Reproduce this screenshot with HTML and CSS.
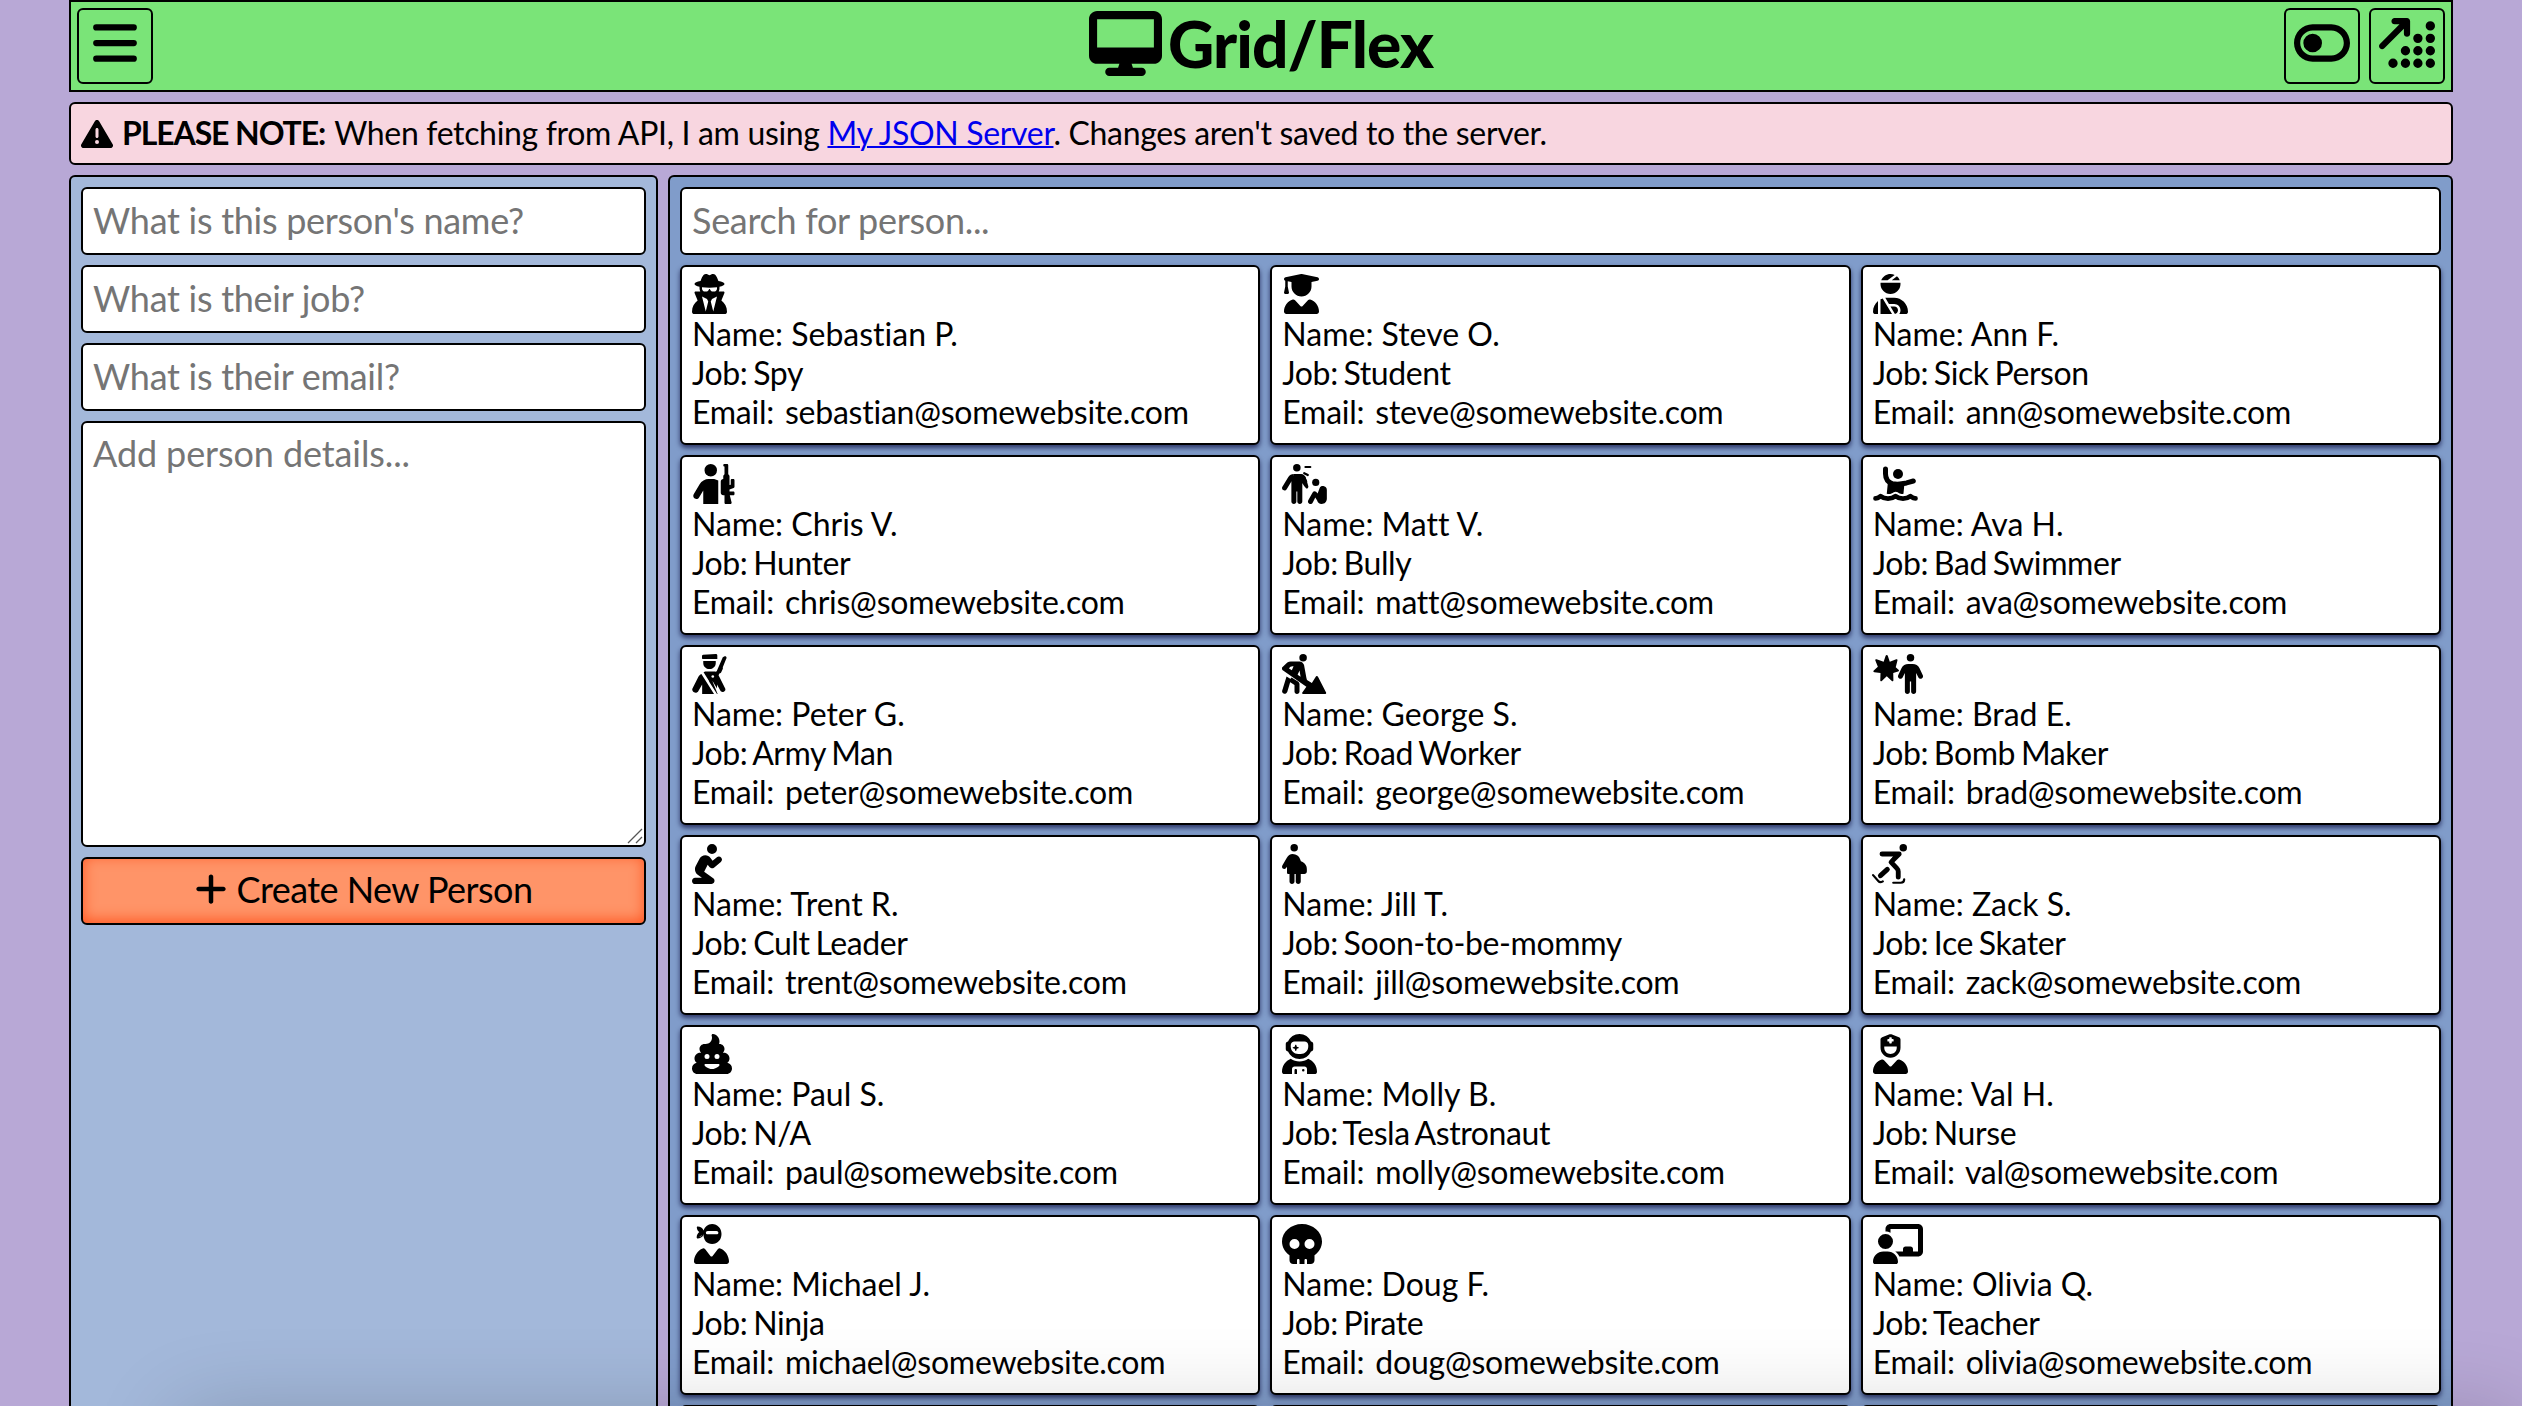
FILE: index.html
```html
<!DOCTYPE html>
<html lang="en">
<head>
<meta charset="utf-8">
<title>Grid/Flex</title>
<link rel="stylesheet" href="styles.css">
</head>
<body>
<svg class="sprite" aria-hidden="true">
  <symbol id="bars" viewBox="0 0 448 512"><path d="M32 96H416M32 256H416M32 416H416" fill="none" stroke="currentColor" stroke-width="64" stroke-linecap="round"/></symbol>
  <symbol id="desktop" viewBox="0 0 576 512"><path d="M64 0C28.7 0 0 28.7 0 64V352c0 35.3 28.7 64 64 64H240l-10.7 32H160c-17.7 0-32 14.3-32 32s14.3 32 32 32H416c17.7 0 32-14.3 32-32s-14.3-32-32-32H346.7L336 416H512c35.3 0 64-28.7 64-64V64c0-35.3-28.7-64-64-64H64zM512 64V288H64V64H512z"/></symbol>
  <symbol id="toggle" viewBox="0 0 576 512"><path d="M384 128c70.7 0 128 57.3 128 128s-57.3 128-128 128H192c-70.7 0-128-57.3-128-128s57.3-128 128-128H384zM576 256c0-106-86-192-192-192H192C86 64 0 150 0 256S86 448 192 448H384c106 0 192-86 192-192zM192 352a96 96 0 1 0 0-192 96 96 0 1 0 0 192z"/></symbol>
  <symbol id="dots" viewBox="0 0 576 512"><path d="M160 0c-17.7 0-32 14.3-32 32s14.3 32 32 32h50.7L9.4 265.4c-12.5 12.5-12.5 32.8 0 45.3s32.8 12.5 45.3 0L256 109.3V160c0 17.7 14.3 32 32 32s32-14.3 32-32V32c0-17.7-14.3-32-32-32H160z"/><path d="M528 80h0M400 208h0M528 208h0M272 336h0M400 336h0M528 336h0M144 464h0M272 464h0M400 464h0M528 464h0" stroke="currentColor" stroke-width="96" stroke-linecap="round"/></symbol>
  <symbol id="warning" viewBox="0 0 512 512"><path d="M256 32c14.2 0 27.3 7.5 34.5 19.8l216 368c7.3 12.4 7.3 27.7 .2 40.1S486.3 480 472 480H40c-14.3 0-27.6-7.7-34.7-20.1s-7-27.8 .2-40.1l216-368C228.7 39.5 241.8 32 256 32zm0 128c-13.3 0-24 10.7-24 24V296c0 13.3 10.7 24 24 24s24-10.7 24-24V184c0-13.3-10.7-24-24-24zm32 224a32 32 0 1 0 -64 0 32 32 0 1 0 64 0z"/></symbol>
  <symbol id="plus" viewBox="0 0 448 512"><path d="M256 80c0-17.7-14.3-32-32-32s-32 14.3-32 32V224H48c-17.7 0-32 14.3-32 32s14.3 32 32 32H192V432c0 17.7 14.3 32 32 32s32-14.3 32-32V288H400c17.7 0 32-14.3 32-32s-14.3-32-32-32H256V80z"/></symbol>
  <symbol id="spy" viewBox="0 0 448 512"><path d="M224 16c-6.7 0-10.8-2.8-15.5-6.1C201.9 5.4 194 0 176 0c-30.5 0-52 43.7-66 89.4C62.7 98.1 32 112.2 32 128c0 14.3 25 27.1 64.6 35.9c-.4 4-.6 8-.6 12.1c0 17 3.3 33.2 9.3 48H45.4C38 224 32 230 32 237.4c0 1.7 .3 3.4 1 5l38.8 96.9C28.2 371.8 0 423.8 0 482.3C0 498.7 13.3 512 29.7 512H418.3c16.4 0 29.7-13.3 29.7-29.7c0-58.5-28.2-110.4-71.7-143L415 242.4c.6-1.6 1-3.3 1-5c0-7.4-6-13.4-13.4-13.4H342.7c6-14.8 9.3-31 9.3-48c0-4.1-.2-8.1-.6-12.1C391 155.1 416 142.3 416 128c0-15.8-30.7-29.9-78-38.6C324 43.7 302.5 0 272 0c-18 0-25.9 5.4-32.5 9.9c-4.8 3.3-8.8 6.1-15.5 6.1zm56 208H267.6c-16.5 0-31.1-10.6-36.3-26.2c-2.3-7-12.2-7-14.5 0c-5.2 15.6-19.9 26.2-36.3 26.2H168c-22.1 0-40-17.9-40-40V169.6c28.2 4.1 61 6.4 96 6.4s67.8-2.3 96-6.4V184c0 22.1-17.9 40-40 40zm-88 96l16 32L176 480 128 288l64 32zm128-32L272 480 240 352l16-32 64-32z"/></symbol>
  <symbol id="student" viewBox="0 0 448 512"><path d="M219.3 .5c3.1-.6 6.3-.6 9.4 0l200 40C439.9 42.7 448 52.6 448 64s-8.1 21.3-19.3 23.5L352 102.9V160c0 70.7-57.3 128-128 128s-128-57.3-128-128V102.9L48 93.3v65.1l15.7 78.4c.9 4.7-.3 9.6-3.3 13.3s-7.6 5.9-12.4 5.9H16c-4.8 0-9.3-2.1-12.4-5.9s-4.3-8.6-3.3-13.3L16 158.4V86.6C6.5 83.3 0 74.3 0 64C0 52.6 8.1 42.7 19.3 40.5l200-40zM111.9 327.7c10.5-3.4 21.8 .4 29.4 8.5l71 75.5c6.3 6.7 17 6.7 23.3 0l71-75.5c7.6-8.1 18.9-11.9 29.4-8.5C401 348.6 448 409.4 448 481.3c0 17-13.8 30.7-30.7 30.7H30.7C13.8 512 0 498.2 0 481.3c0-71.9 47-132.7 111.9-153.6z"/></symbol>
  <symbol id="injured" viewBox="0 0 448 512"><path d="M240 80H342.7c-7.9-19.5-20.4-36.5-36.2-49.9L240 80zm37.7-68.2C261.3 4.2 243.2 0 224 0c-53.7 0-99.7 33.1-118.7 80h81.4l91-68.2zM224 256c70.7 0 128-57.3 128-128c0-5.4-.3-10.8-1-16H97c-.7 5.2-1 10.6-1 16c0 70.7 57.3 128 128 128zM124 312.4c-9.7 3.1-19.1 7-28 11.7V512H243.7L181.5 408.6 124 312.4zm33-7.2L204.3 384H272c44.2 0 80 35.8 80 80c0 18-6 34.6-16 48h82.3c16.4 0 29.7-13.3 29.7-29.7c0-98.5-79.8-178.3-178.3-178.3H178.3c-7.2 0-14.3 .4-21.3 1.3zM0 482.3C0 498.7 13.3 512 29.7 512H64V345.4C24.9 378.1 0 427.3 0 482.3zM320 464c0-26.5-21.5-48-48-48H223.5l57.1 95C303 508.6 320 488.3 320 464z"/></symbol>
  <symbol id="rifle" viewBox="0 0 576 512"><path d="M265.2 192c25.4 0 49.8 7.1 70.8 19.9V512H144V337.7L90.4 428.3c-11.2 19-35.8 25.3-54.8 14.1s-25.3-35.8-14.1-54.8L97.7 258.8c24.5-41.4 69-66.8 117.1-66.8h50.4zM160 80a80 80 0 1 1 160 0A80 80 0 1 1 160 80zM448 0c8.8 0 16 7.2 16 16V132.3c9.6 5.5 16 15.9 16 27.7V269.3l16-5.3V208c0-8.8 7.2-16 16-16h16c8.8 0 16 7.2 16 16v84.5c0 6.9-4.4 13-10.9 15.2L480 325.3V352h48c8.8 0 16 7.2 16 16v16c0 8.8-7.2 16-16 16H484l23 92.1c2.5 10.1-5.1 19.9-15.5 19.9H432c-8.8 0-16-7.2-16-16V400H400c-17.7 0-32-14.3-32-32V224c0-17.7 14.3-32 32-32V160c0-11.8 6.4-22.2 16-27.7V32c-8.8 0-16-7.2-16-16s7.2-16 16-16h32z"/></symbol>
  <symbol id="bully" viewBox="0 0 576 512">
    <circle cx="190" cy="48" r="48"/>
    <path d="M150 128h84c22 0 42 11 54 30l38 66-66 24V480c0 17.700-14.300 32-32 32s-32-14.300-32-32V352h-12V480c0 17.700-14.300 32-32 32s-32-14.300-32-32V220z"/>
    <path d="M150 128c-28 0-54 14-69 38L5 290c-9 15-4 35 11 44s35 4 44-11l60-98h20zM234 128c28 0 54 14 69 38l32 112c9 15-6 42-24 36l-28-34-43-70z"/>
    <path d="M300 38h62M284 118l46 24" fill="none" stroke="currentColor" stroke-width="28" stroke-linecap="round"/>
    <circle cx="432" cy="236" r="46"/>
    <path d="M482 306c10-20 34-28 56-20 22 6 36 24 36 46v110c0 44-30 70-66 70-32 0-50-20-58-46l-24-38-32 66c-8 18-26 24-44 14-18-8-22-28-14-44l56-100c10-18 30-22 44-8l20 20z"/>
  </symbol>
  <symbol id="swimmer" viewBox="0 0 576 512">
    <circle cx="320" cy="128" r="64"/>
    <path d="M160 64v60c0 62 34 110 90 130l60 6c40 0 80-12 120-18l86-24" fill="none" stroke="currentColor" stroke-width="64" stroke-linecap="round" stroke-linejoin="round"/>
    <path d="M194 200l60 30h150l-14 150c-30 12-50-2-74-18-14-10-36-10-50 0-28 20-56 30-90 18z"/>
    <path d="M32 440c34 0 46-16 64-28 30 24 66 32 96 32s66-8 96-32c30 24 66 32 96 32s66-8 96-32c18 12 30 28 64 28" fill="none" stroke="currentColor" stroke-width="60" stroke-linecap="round" stroke-linejoin="round"/>
  </symbol>
  <symbol id="army" viewBox="0 0 448 512">
    <path d="M128 24c0-8 6-14 14-15l164-9c10 0 18 8 18 18v46H140c-8 0-12-6-12-14zM144 88h160v26c0 44-35 78-80 78s-80-34-80-78z"/>
    <path d="M394 40l24-10c10-4 22 4 24 14 2 6 0 12-4 18l-44 108c4 8 2 18-2 26l-18 38c-4 10-14 16-24 14l-10 24 80 160c18 30 0 44-14 50s-34 4-42-12l-44-80v50l-74-124 36-80 34-16z"/>
    <path d="M120 256l162 256H130V390l-50 86c-10 18-34 26-54 14S-2 458 6 442l76-150c8-14 20-28 38-36zM148 232c18-10 38-8 60-8h92v120l-70 20zM262 348l66 164h-8L216 350z"/>
    <circle cx="266" cy="288" r="17" fill="#fff"/>
  </symbol>
  <symbol id="digger" viewBox="0 0 576 512">
    <circle cx="270" cy="48" r="48"/>
    <path d="M4 168l64-58c14-10 28-14 44-14h110c30 0 52 20 60 46l30 162c2 10 6 20 8 28l62 38 46-72c10-20 26-20 36 0l100 196c4 10 0 18-10 18H272c-12 0-18-10-12-20l52-72-92-64L14 212c-14-10-20-30-10-44zm86 16l36 24 22-50c-24-6-46 4-58 26zm110 80l38 26-14-78z" fill-rule="evenodd"/>
    <path d="M58 288l58 36-48 158c-6 18-24 30-42 26s-28-20-24-38zM122 300l82 52c12 8 20 20 20 34v94c0 18-14 32-32 32s-32-14-32-32v-82l-74-50z"/>
  </symbol>
  <symbol id="burst" viewBox="0 0 640 512">
    <path d="M176 12c7 0 11 5 13 10l26 76 82-30c12-4 20 6 16 16l-22 84 36 32c10 8 6 20-6 24l-62 20 2 92c0 12-10 18-20 10l-65-62-63 62c-10 8-20 2-20-10l3-92-78-10C4 232 0 218 10 210l52-46-32-80c-4-12 4-20 16-16l90 30 26-76c2-6 7-10 14-10z"/>
    <circle cx="480" cy="48" r="48"/>
    <path d="M452 128h56c38 0 70 18 86 50l42 90c9 16 4 36-12 46-16 8-34 2-43-14l-29-58V480c0 18-14 32-32 32s-32-14-32-32V352h-16V480c0 18-14 32-32 32s-32-14-32-32V242l-29 58c-9 16-27 22-43 14-16-10-21-30-12-46l42-90c16-32 48-50 86-50z"/>
  </symbol>
  <symbol id="praying" viewBox="32 0 384 512"><path d="M352 64A64 64 0 1 0 224 64a64 64 0 1 0 128 0zM232.7 264l22.9 31.500c6.500 8.900 16.300 14.700 27.200 16.100s21.900-1.700 30.400-8.700l88-72c17.100-14 19.600-39.200 5.600-56.300s-39.200-19.600-56.300-5.600l-55.200 45.200-26.200-36C253.600 156.700 228.600 144 202 144c-30.900 0-59.200 17.100-73.600 44.400L79.800 280.900c-20.200 38.500-9.400 85.900 25.600 111.800L158.600 432H72c-22.100 0-40 17.900-40 40s17.900 40 40 40H280c17.300 0 32.600-11.100 38-27.500s-.3-34.400-14.200-44.700L187.700 354l45-90z"/></symbol>
  <symbol id="pregnant" viewBox="0 0 320 512">
    <circle cx="156" cy="48" r="48"/>
    <path d="M136 128c50 0 82 28 96 66l10 28c46 16 76 52 76 98v32c0 18-14 32-32 32h-46v96c0 18-14 32-32 32s-32-14-32-32v-96h-16v96c0 18-14 32-32 32s-32-14-32-32V384H80c-10 0-16-8-16-16v-78l-12 18c-10 14-28 16-42 6-12-10-12-28-4-42l56-96c16-28 42-48 74-48z"/>
  </symbol>
  <symbol id="skater" viewBox="0 0 512 512">
    <circle cx="400" cy="48" r="48"/>
    <path d="M128 128h220L244 232l78 84c10 10 14 22 14 36v72" fill="none" stroke="currentColor" stroke-width="62" stroke-linecap="round" stroke-linejoin="round"/>
    <path d="M290 128h68L250 250l-30-20z"/>
    <path d="M196 326l-88 80" fill="none" stroke="currentColor" stroke-width="64" stroke-linecap="round"/>
    <path d="M14 398l66 76c14 16 34 20 58 4M272 496h96c28 0 44-18 44-44" fill="none" stroke="currentColor" stroke-width="28" stroke-linecap="round"/>
  </symbol>
  <symbol id="poo" viewBox="0 0 512 512"><path d="M268.900 .9c-5.500-.7-11 1.400-14.500 5.700s-4.600 10.100-2.800 15.400c2.800 8.200 4.300 16.900 4.300 26.100c0 44.100-35.700 79.900-79.800 80H160c-35.300 0-64 28.700-64 64c0 19.100 8.400 36.300 21.700 48H104c-39.800 0-72 32.200-72 72c0 23.200 11 43.800 28 57c-34.100 5.700-60 35.300-60 71c0 39.800 32.200 72 72 72H440c39.800 0 72-32.200 72-72c0-35.700-25.900-65.300-60-71c17-13.200 28-33.800 28-57c0-39.800-32.200-72-72-72H394.300c13.300-11.700 21.700-28.900 21.700-48c0-35.300-28.700-64-64-64h-5.500c3.500-10 5.500-20.800 5.500-32c0-48.600-36.200-88.800-83.100-95.100zM192 256a32 32 0 1 1 0 64 32 32 0 1 1 0-64zm96 32a32 32 0 1 1 64 0 32 32 0 1 1 -64 0zm64 108.300c0 2.400-.7 4.800-2.200 6.700c-8.200 10.500-39.500 45-93.800 45s-85.600-34.600-93.800-45c-1.500-1.900-2.200-4.300-2.200-6.700c0-6.800 5.500-12.300 12.300-12.300H339.700c6.800 0 12.300 5.500 12.300 12.300z"/></symbol>
  <symbol id="astronaut" viewBox="0 0 448 512"><path d="M370.7 96.100C346.100 39.500 289.700 0 224 0S101.900 39.500 77.300 96.100C60.900 97.500 48 111.200 48 128v64c0 16.800 12.900 30.500 29.300 31.900C101.900 280.500 158.300 320 224 320s122.100-39.500 146.700-96.100c16.400-1.400 29.300-15.100 29.300-31.900V128c0-16.800-12.900-30.500-29.300-31.900zM336 144v16c0 53-43 96-96 96H208c-53 0-96-43-96-96V144c0-26.500 21.500-48 48-48H288c26.500 0 48 21.500 48 48zM189.300 162.700l-6-21.200c-.9-3.300-3.900-5.500-7.300-5.500s-6.400 2.200-7.300 5.500l-6 21.200-21.200 6c-3.300 .9-5.500 3.900-5.500 7.300s2.200 6.400 5.500 7.300l21.200 6 6 21.200c.9 3.300 3.900 5.500 7.300 5.500s6.400-2.200 7.300-5.500l6-21.200 21.200-6c3.300-.9 5.500-3.900 5.500-7.300s-2.200-6.400-5.500-7.300l-21.200-6zM112.700 316.500C46.700 342.600 0 407 0 482.300C0 498.700 13.300 512 29.700 512H128V448c0-17.700 14.300-32 32-32H288c17.700 0 32 14.300 32 32v64l98.300 0c16.400 0 29.700-13.300 29.700-29.700c0-75.300-46.700-139.700-112.700-165.800C303.900 338.800 265.500 352 224 352s-79.900-13.200-111.300-35.500zM176 448c-8.800 0-16 7.200-16 16v48h32V464c0-8.800-7.200-16-16-16zm96 32a16 16 0 1 0 0-32 16 16 0 1 0 0 32z"/></symbol>
  <symbol id="nurse" viewBox="0 0 448 512"><path d="M96 128V70.200c0-13.300 8.300-25.300 20.800-30l96-36c7.200-2.700 15.200-2.700 22.500 0l96 36c12.500 4.700 20.800 16.600 20.800 30V128h-.3c.2 2.600 .3 5.300 .3 8v40c0 70.700-57.300 128-128 128s-128-57.300-128-128V136c0-2.700 .1-5.400 .3-8H96zm48 48c0 44.200 35.800 80 80 80s80-35.800 80-80V160H144v16zM111.900 327.700c10.500-3.400 21.800 .4 29.400 8.500l71 75.500c6.300 6.700 17 6.700 23.300 0l71-75.500c7.600-8.100 18.900-11.900 29.400-8.500C401 348.600 448 409.400 448 481.300c0 17-13.800 30.700-30.700 30.700H30.700C13.800 512 0 498.200 0 481.300c0-71.900 47-132.700 111.900-153.600zM208 48V64H192c-4.400 0-8 3.600-8 8V88c0 4.400 3.600 8 8 8h16v16c0 4.400 3.600 8 8 8h16c4.400 0 8-3.600 8-8V96h16c4.400 0 8-3.600 8-8V72c0-4.400-3.600-8-8-8H240V48c0-4.400-3.600-8-8-8H216c-4.400 0-8 3.600-8 8z" fill-rule="evenodd"/></symbol>
  <symbol id="ninja" viewBox="0 0 448 512"><path d="M64 160c24 0 44-10 58-26C122 206 164 256 232 256c72 0 120-56 120-128S300 0 232 0c-56 0-96 38-108 84C110 52 80 32 48 32c-8 0-14 6-12 14 2 26 14 46 32 56-20 14-32 38-34 66 0 8 4 16 12 16 30 0 60-16 76-44zM152 112c0-14 10-24 24-24H288c14 0 24 10 24 24s-10 20-24 20H176c-14 0-24-6-24-20zM111.900 312c10.500-3.400 21.800 .4 29.400 8.500l71 91.200c6.300 6.700 17 6.700 23.300 0l71-91.200c7.600-8.100 18.900-11.900 29.400-8.500C401 333 448 409.400 448 481.300c0 17-13.800 30.700-30.700 30.700H30.700C13.800 512 0 498.200 0 481.300c0-71.900 47-148 111.900-169.300z" fill-rule="evenodd"/></symbol>
  <symbol id="skull" viewBox="0 0 512 512"><path d="M416 398.900c58.500-41.100 96-104.100 96-174.900C512 100.300 397.400 0 256 0S0 100.300 0 224c0 70.700 37.500 133.800 96 174.900v65.100c0 26.500 21.500 48 48 48h48V464c0-8.800 7.200-16 16-16s16 7.200 16 16v48h64V464c0-8.800 7.200-16 16-16s16 7.200 16 16v48h48c26.500 0 48-21.500 48-48V398.900zM96 256a64 64 0 1 1 128 0A64 64 0 1 1 96 256zm256-64a64 64 0 1 1 0 128 64 64 0 1 1 0-128z" fill-rule="evenodd"/></symbol>
  <symbol id="teacher" viewBox="0 0 640 512"><path d="M160 64c0-35.300 28.700-64 64-64H576c35.300 0 64 28.700 64 64V352c0 35.300-28.700 64-64 64H336.800c-11.800-25.500-29.900-47.500-52.400-64H384V320c0-17.700 14.300-32 32-32h64c17.700 0 32 14.300 32 32v32h64V64L224 64v49.100C205.200 102.200 183.300 96 160 96V64zm0 64a96 96 0 1 1 0 192 96 96 0 1 1 0-192zM133.300 352h53.300C260.300 352 320 411.700 320 485.300c0 14.700-11.900 26.700-26.700 26.700H26.700C11.900 512 0 500.100 0 485.300C0 411.700 59.700 352 133.300 352z"/></symbol>
</svg>

<div class="page">
  <header class="header">
    <button class="icon-button"><svg class="icon w448"><use href="#bars"/></svg></button>
    <h1 class="title"><svg class="title-icon"><use href="#desktop"/></svg><span>Grid/Flex</span></h1>
    <div class="actions">
      <button class="icon-button"><svg class="icon w576"><use href="#toggle"/></svg></button>
      <button class="icon-button"><svg class="icon w576"><use href="#dots"/></svg></button>
    </div>
  </header>

  <p class="note"><svg class="note-icon"><use href="#warning"/></svg><strong>PLEASE NOTE:</strong> <span>When fetching from API, I am using <a href="#">My JSON Server</a>. Changes aren't saved to the server.</span></p>

  <main class="columns">
    <form class="panel form">
      <input class="field" placeholder="What is this person's name?">
      <input class="field" placeholder="What is their job?">
      <input class="field" placeholder="What is their email?">
      <div class="details">
        <textarea class="field area" placeholder="Add person details..."></textarea>
        <svg class="grip" viewBox="0 0 16 16"><path d="M1 15L15 1M9 15L15 9" fill="none" stroke="#555" stroke-width="1.300"/></svg>
      </div>
      <button class="create" type="button"><svg class="plus-icon"><use href="#plus"/></svg><span>Create New Person</span></button>
    </form>

    <section class="panel list">
      <input class="field" placeholder="Search for person...">
      <div class="cards">
        <article class="card"><svg class="avatar w448"><use href="#spy"/></svg><p>Name: Sebastian P.</p><p class="job">Job: Spy</p><p class="email">Email: sebastian@somewebsite.com</p></article>
        <article class="card"><svg class="avatar w448 inset"><use href="#student"/></svg><p>Name: Steve O.</p><p class="job">Job: Student</p><p class="email">Email: steve@somewebsite.com</p></article>
        <article class="card"><svg class="avatar w448"><use href="#injured"/></svg><p>Name: Ann F.</p><p class="job">Job: Sick Person</p><p class="email">Email: ann@somewebsite.com</p></article>
        <article class="card"><svg class="avatar w576"><use href="#rifle"/></svg><p>Name: Chris V.</p><p class="job">Job: Hunter</p><p class="email">Email: chris@somewebsite.com</p></article>
        <article class="card"><svg class="avatar w576"><use href="#bully"/></svg><p>Name: Matt V.</p><p class="job">Job: Bully</p><p class="email">Email: matt@somewebsite.com</p></article>
        <article class="card"><svg class="avatar w576"><use href="#swimmer"/></svg><p>Name: Ava H.</p><p class="job">Job: Bad Swimmer</p><p class="email">Email: ava@somewebsite.com</p></article>
        <article class="card"><svg class="avatar w448"><use href="#army"/></svg><p>Name: Peter G.</p><p class="job">Job: Army Man</p><p class="email">Email: peter@somewebsite.com</p></article>
        <article class="card"><svg class="avatar w576"><use href="#digger"/></svg><p>Name: George S.</p><p class="job">Job: Road Worker</p><p class="email">Email: george@somewebsite.com</p></article>
        <article class="card"><svg class="avatar w640"><use href="#burst"/></svg><p>Name: Brad E.</p><p class="job">Job: Bomb Maker</p><p class="email">Email: brad@somewebsite.com</p></article>
        <article class="card"><svg class="avatar w384"><use href="#praying"/></svg><p>Name: Trent R.</p><p class="job">Job: Cult Leader</p><p class="email">Email: trent@somewebsite.com</p></article>
        <article class="card"><svg class="avatar w320"><use href="#pregnant"/></svg><p>Name: Jill T.</p><p class="job">Job: Soon-to-be-mommy</p><p class="email">Email: jill@somewebsite.com</p></article>
        <article class="card"><svg class="avatar w512 narrow"><use href="#skater"/></svg><p>Name: Zack S.</p><p class="job">Job: Ice Skater</p><p class="email">Email: zack@somewebsite.com</p></article>
        <article class="card"><svg class="avatar w512"><use href="#poo"/></svg><p>Name: Paul S.</p><p class="job">Job: N/A</p><p class="email">Email: paul@somewebsite.com</p></article>
        <article class="card"><svg class="avatar w448"><use href="#astronaut"/></svg><p>Name: Molly B.</p><p class="job">Job: Tesla Astronaut</p><p class="email">Email: molly@somewebsite.com</p></article>
        <article class="card"><svg class="avatar w448"><use href="#nurse"/></svg><p>Name: Val H.</p><p class="job">Job: Nurse</p><p class="email">Email: val@somewebsite.com</p></article>
        <article class="card"><svg class="avatar w448 inset"><use href="#ninja"/></svg><p>Name: Michael J.</p><p class="job">Job: Ninja</p><p class="email">Email: michael@somewebsite.com</p></article>
        <article class="card"><svg class="avatar w512"><use href="#skull"/></svg><p>Name: Doug F.</p><p class="job">Job: Pirate</p><p class="email">Email: doug@somewebsite.com</p></article>
        <article class="card"><svg class="avatar w640"><use href="#teacher"/></svg><p>Name: Olivia Q.</p><p class="job">Job: Teacher</p><p class="email">Email: olivia@somewebsite.com</p></article>
        <article class="card"></article>
        <article class="card"></article>
        <article class="card"></article>
      </div>
    </section>
  </main>
</div>
<div class="shade"></div>
</body>
</html>
```
FILE: styles.css
```css
* { box-sizing: border-box; }

html, body { height: 100%; overflow: hidden; }

body {
  margin: 0;
  background: #b8a8d6;
  color: #000;
  font: 32px/39px Lato, "Liberation Sans", sans-serif;
  font-variant-ligatures: none;
}

svg { fill: currentColor; }
p, h1 { margin: 0; }
button, input, textarea { font: inherit; color: inherit; }

.sprite { position: absolute; width: 0; height: 0; }

.page {
  display: flex;
  flex-direction: column;
  gap: 10px;
  width: 2384px;
  height: 1406px;
  margin-left: 69px;
  overflow: hidden;
}

.header {
  display: grid;
  grid-template-columns: 1fr auto 1fr;
  align-items: center;
  flex: none;
  height: 92px;
  padding: 0 6px;
  border: 2px solid #000;
  background: #7ae478;
}

.icon-button {
  display: flex;
  align-items: flex-start;
  justify-content: center;
  width: 76px;
  height: 76px;
  padding: 8px 0 0;
  border: 2px solid #000;
  border-radius: 6px;
  background: none;
}

.icon { height: 50px; }
.icon.w448 { width: 44px; }
.icon.w576 { width: 56px; }

.actions { display: flex; justify-content: flex-end; gap: 9px; }

.title {
  display: flex;
  gap: 6px;
  padding-bottom: 4px;
  font-size: 64px;
  line-height: 76px;
  font-weight: 900;
  letter-spacing: -.9px;
}
.title-icon { width: 73px; height: 65px; margin-top: 5px; }

.note {
  display: flex;
  align-items: center;
  flex: none;
  height: 63px;
  padding: 0 10px 3px;
  border: 2px solid #000;
  border-radius: 6px;
  background: #f8d6e0;
  letter-spacing: -.33px;
}
.note-icon { width: 32px; height: 32px; margin: 3px 9px 0 0; }
.note strong { margin-right: 9px; letter-spacing: -1.1px; }
.note a { color: #00e; text-decoration-thickness: 2px; }

.columns {
  display: grid;
  grid-template-columns: 589px 1fr;
  gap: 10px;
  flex: 1;
  min-height: 0;
}

.panel {
  display: flex;
  flex-direction: column;
  gap: 10px;
  min-height: 0;
  padding: 10px 10px 0;
  border: 2px solid #000;
  border-bottom: 0;
  border-radius: 6px 6px 0 0;
  overflow: hidden;
}
.form { background: #a3b8da; }
.list { background: #809cca; }

.field {
  display: block;
  flex: none;
  width: 100%;
  height: 68px;
  padding: 0 10px 3px;
  border: 2px solid #000;
  border-radius: 6px;
  background: #fff;
  font-size: 36px;
  line-height: 44px;
  letter-spacing: -.28px;
  outline: 0;
}
.field::placeholder { color: #757575; opacity: 1; }

.details { position: relative; }
.area { height: 426px; padding-top: 8px; letter-spacing: -.1px; resize: none; }
.grip { position: absolute; right: 3px; bottom: 3px; width: 16px; height: 16px; }

.create {
  display: flex;
  align-items: center;
  justify-content: center;
  gap: 10px;
  flex: none;
  height: 68px;
  padding: 0 0 3px;
  border: 2px solid #000;
  border-radius: 6px;
  background: #ff9468;
  box-shadow: inset 0 -3px 14px #ff5722;
  font-size: 36px;
  letter-spacing: -.55px;
}
.plus-icon { width: 32px; height: 36px; margin-top: -2px; }

.cards {
  display: grid;
  grid-template-columns: repeat(3, 1fr);
  grid-auto-rows: 180px;
  gap: 10px;
}

.card {
  padding: 7px 10px;
  border: 2px solid #000;
  border-radius: 6px;
  background: #fff;
  box-shadow: 0 3px 5px rgba(0, 0, 50, .65);
  white-space: nowrap;
}
.job { letter-spacing: -.4px; word-spacing: -2px; }
.email { letter-spacing: -.24px; word-spacing: 3px; }

.avatar { display: block; height: 40px; }
.avatar.w320 { width: 25px; }
.avatar.w384 { width: 30px; }
.avatar.w448 { width: 35px; }
.avatar.w512 { width: 40px; }
.avatar.w576 { width: 45px; }
.avatar.w640 { width: 50px; }
.avatar.narrow { margin-left: -1px; }
.avatar.inset { margin-left: 2px; }

.shade {
  position: fixed;
  top: 1416px;
  left: 180px;
  right: 0;
  height: 200px;
  box-shadow: 0 0 90px rgba(0, 0, 0, .2);
}
```
